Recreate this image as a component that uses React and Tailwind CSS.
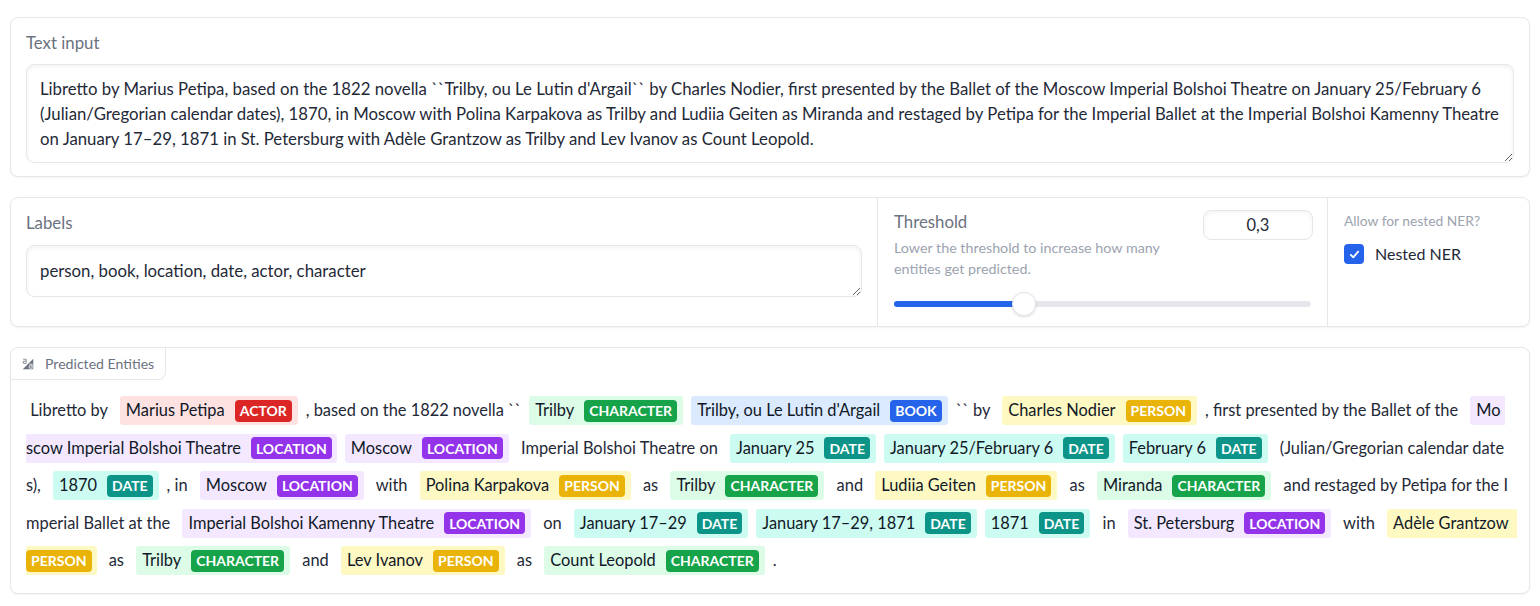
import React from 'react'
import clsx from 'clsx'

const TEXT =
  "Libretto by Marius Petipa, based on the 1822 novella ``Trilby, ou Le Lutin d'Argail`` by Charles Nodier, first presented by the Ballet of the Moscow Imperial Bolshoi Theatre on January 25/February 6\n(Julian/Gregorian calendar dates), 1870, in Moscow with Polina Karpakova as Trilby and Ludiia Geiten as Miranda and restaged by Petipa for the Imperial Ballet at the Imperial Bolshoi Kamenny Theatre\non January 17–29, 1871 in St. Petersburg with Adèle Grantzow as Trilby and Lev Ivanov as Count Leopold."

const COLORS = {
  ACTOR: ['bg-[#fee2e2]', 'bg-[#dc2626]'],
  CHARACTER: ['bg-[#dcfce7]', 'bg-[#16a34a]'],
  BOOK: ['bg-[#dbeafe]', 'bg-[#2563eb]'],
  PERSON: ['bg-[#fef9c3]', 'bg-[#eab308]'],
  LOCATION: ['bg-[#f3e8ff]', 'bg-[#9333ea]'],
  DATE: ['bg-[#ccfbf1]', 'bg-[#0d9488]'],
}

// t = plain text (spaces kept), e = entity
// cut: 'end' -> entity runs on to the next line, 'start' -> entity continued from the line above
const t = (text) => ({ text })
const e = (text, label, cut, tail) => ({ text, label, cut, tail })

const LINES = [
  [
    t(' Libretto by '),
    e('Marius Petipa', 'ACTOR'),
    t(', based on the 1822 novella ``'),
    e('Trilby', 'CHARACTER'),
    e("Trilby, ou Le Lutin d'Argail", 'BOOK'),
    t('`` by '),
    e('Charles Nodier', 'PERSON'),
    t(', first presented by the Ballet of the '),
    e('Mo', 'LOCATION', 'end', 'pr-[4px]'),
  ],
  [
    e('scow Imperial Bolshoi Theatre', 'LOCATION', 'start'),
    e('Moscow', 'LOCATION'),
    t(' Imperial Bolshoi Theatre on '),
    e('January 25', 'DATE'),
    e('January 25/February 6', 'DATE'),
    e('February 6', 'DATE'),
    t(' (Julian/Gregorian calendar date'),
  ],
  [
    t('s), '),
    e('1870', 'DATE'),
    t(', in '),
    e('Moscow', 'LOCATION'),
    t(' with '),
    e('Polina Karpakova', 'PERSON'),
    t(' as '),
    e('Trilby', 'CHARACTER'),
    t(' and '),
    e('Ludiia Geiten', 'PERSON'),
    t(' as '),
    e('Miranda', 'CHARACTER'),
    t(' and restaged by Petipa for the I'),
  ],
  [
    t('mperial Ballet at the '),
    e('Imperial Bolshoi Kamenny Theatre', 'LOCATION'),
    t(' on '),
    e('January 17–29', 'DATE'),
    e('January 17–29, 1871', 'DATE'),
    e('1871', 'DATE'),
    t(' in '),
    e('St. Petersburg', 'LOCATION'),
    t(' with '),
    e('Adèle Grantzow', 'PERSON', 'end', 'pr-[8px]'),
  ],
  [
    e('', 'PERSON', 'start'),
    t(' as '),
    e('Trilby', 'CHARACTER'),
    t(' and '),
    e('Lev Ivanov', 'PERSON'),
    t(' as '),
    e('Count Leopold', 'CHARACTER'),
    t('.'),
  ],
]

function Span({ item }) {
  if (!item.label) {
    return <span className="shrink-0 whitespace-pre text-[#1f2937]">{item.text}</span>
  }
  const [bg, badge] = COLORS[item.label]
  return (
    <span
      className={clsx(
        'flex h-[29px] shrink-0 items-center gap-[10px] text-[#111827]',
        bg,
        item.cut === 'start' && 'rounded-r-[3px] pr-[5px]',
        item.cut === 'end' && clsx('rounded-l-[3px] pl-[6px]', item.tail),
        !item.cut && 'rounded-[3px] px-[6px]'
      )}
    >
      {item.text && <span className="whitespace-pre">{item.text}</span>}
      {item.cut !== 'end' && (
        <span className={clsx('flex h-[22px] items-center rounded-[4px] px-[5px] text-[14px] font-bold text-white', badge)}>
          {item.label}
        </span>
      )}
    </span>
  )
}

function HighlightIcon() {
  return (
    <svg viewBox="0 0 32 32" className="h-[12px] w-[12px] text-[#6b7280]">
      <path
        fill="currentColor"
        d="M12 15H5a3 3 0 0 1-3-3v-2a3 3 0 0 1 3-3h5V5a1 1 0 0 0-1-1H3V2h6a3 3 0 0 1 3 3zM5 9a1 1 0 0 0-1 1v2a1 1 0 0 0 1 1h5V9zm15 14v2a1 1 0 0 0 1 1h5v-4h-5a1 1 0 0 0-1 1z"
      />
      <path fill="currentColor" d="M2 30h28V2Zm26-2h-7a3 3 0 0 1-3-3v-2a3 3 0 0 1 3-3h5v-2a1 1 0 0 0-1-1h-6v-2h6a3 3 0 0 1 3 3Z" />
    </svg>
  )
}

export default function App() {
  return (
    <div className="min-h-screen bg-white px-[10px] pt-[17px] font-['Lato',sans-serif] text-[16px] text-[#1f2937]">
      {/* Text input */}
      <div className="rounded-lg border border-[#e5e7eb] bg-white px-[15px] pb-[13px] pt-[15px] shadow-[0_1px_2px_rgba(0,0,0,0.05)]">
        <div className="mb-[11px] text-[16.8px] leading-[20px] text-[#6b7280]">Text input</div>
        <textarea
          readOnly
          wrap="off"
          value={TEXT}
          className="block h-[99px] w-full resize-y overflow-hidden rounded-lg border border-[#e5e7eb] bg-white px-[13px] pt-[11px] text-[16.75px] leading-[25px] text-[#1f2937] shadow-[inset_0_2px_4px_rgba(0,0,0,0.05)] outline-none"
        />
      </div>

      {/* Labels / threshold / nested */}
      <div className="mt-[20px] flex rounded-lg border border-[#e5e7eb] bg-white shadow-[0_1px_2px_rgba(0,0,0,0.05)]">
        <div className="w-[867px] border-r border-[#e5e7eb] px-[15px] pt-[15px]">
          <div className="mb-[12px] text-[16.8px] leading-[20px] text-[#6b7280]">Labels</div>
          <textarea
            readOnly
            rows={1}
            value="person, book, location, date, actor, character"
            className="block h-[52px] w-full resize-y rounded-lg border border-[#e5e7eb] bg-white px-[13px] py-[12px] text-[16.8px] leading-[25px] text-[#1f2937] shadow-[inset_0_2px_4px_rgba(0,0,0,0.05)] outline-none"
          />
        </div>

        <div className="w-[450px] border-r border-[#e5e7eb] px-[16px] pb-[9px] pt-[12px]">
          <div className="flex items-start justify-between gap-[12px]">
            <div className="flex-1 pt-[2px]">
              <div className="text-[16.8px] leading-[20px] text-[#6b7280]">Threshold</div>
              <div className="mt-[5px] max-w-[290px] text-[14.3px] leading-[21px] text-[#9ca3af]">
                Lower the threshold to increase how many entities get predicted.
              </div>
            </div>
            <div className="mr-[-2px] flex h-[30px] w-[110px] items-center justify-center rounded-lg border border-[#e5e7eb] bg-white text-[16.5px] text-[#1f2937] shadow-[inset_0_2px_4px_rgba(0,0,0,0.05)]">
              0,3
            </div>
          </div>
          <div className="relative mt-[12px] flex h-[26px] items-center">
            <div className="h-[6px] w-full rounded-full bg-[#e5e7eb]">
              <div className="h-full w-[30.5%] rounded-full bg-[#2563eb]" />
            </div>
            <div className="absolute left-[118px] top-[1px] h-[24px] w-[24px] rounded-full border border-[#e5e7eb] bg-white shadow-[0_1px_3px_rgba(0,0,0,0.15)]" />
          </div>
        </div>

        <div className="flex-1 px-[16px] pt-[13px]">
          <div className="text-[13.8px] leading-[20px] text-[#9ca3af]">Allow for nested NER?</div>
          <label className="mt-[11px] flex items-center gap-[11px]">
            <span className="flex h-[20px] w-[20px] items-center justify-center rounded-[4px] bg-[#2563eb]">
              <svg viewBox="0 0 16 16" className="h-[13px] w-[13px]">
                <path d="M3.5 8.5l3 3 6-7" fill="none" stroke="white" strokeWidth="2.2" strokeLinecap="round" strokeLinejoin="round" />
              </svg>
            </span>
            <span className="text-[16px] text-[#1f2937]">Nested NER</span>
          </label>
        </div>
      </div>

      {/* Predicted entities */}
      <div className="mt-[20px] flex flex-col rounded-lg border border-[#e5e7eb] bg-white shadow-[0_1px_2px_rgba(0,0,0,0.05)]">
        <div className="flex h-[32px] w-fit items-center gap-[11px] rounded-br-lg rounded-tl-lg border-b border-r border-[#e5e7eb] pl-[11px] pr-[11px] text-[14.1px] text-[#6b7280]">
          <HighlightIcon />
          Predicted Entities
        </div>
        <div className="px-[15px] pb-[13px] pt-[12px] text-[16.4px]">
          {LINES.map((line, i) => (
            <div key={i} className="flex h-[37.5px] items-center gap-[8px] whitespace-nowrap">
              {line.map((item, j) => (
                <Span key={j} item={item} />
              ))}
            </div>
          ))}
        </div>
      </div>
    </div>
  )
}
